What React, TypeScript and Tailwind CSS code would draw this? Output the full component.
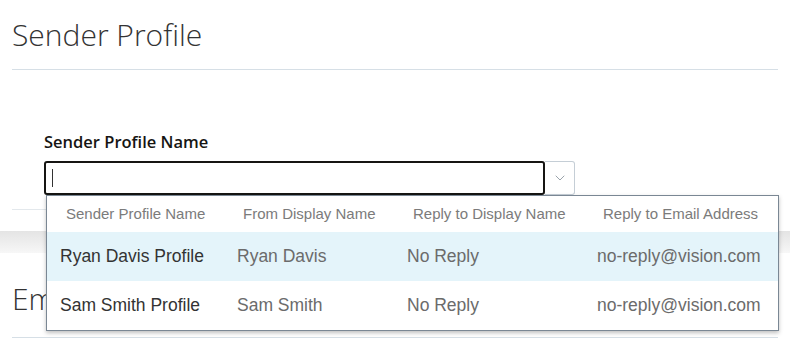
import { ChevronDown } from 'lucide-react';

const rows = [
  { profile: 'Ryan Davis Profile', from: 'Ryan Davis', reply: 'No Reply', email: 'no-reply@vision.com' },
  { profile: 'Sam Smith Profile', from: 'Sam Smith', reply: 'No Reply', email: 'no-reply@vision.com' },
];

const headers = ['Sender Profile Name', 'From Display Name', 'Reply to Display Name', 'Reply to Email Address'];

export default function App() {
  return (
    <div className="w-[790px] h-[341px] overflow-hidden bg-white font-['Liberation_Sans',sans-serif]">
      {/* Page title */}
      <div className="px-3">
        <h1 className="h-[70px] pt-[15px] border-b border-[#d6dfe6] text-[30px] leading-[40px] font-light text-[#333] font-['Open_Sans',sans-serif]">
          Sender Profile
        </h1>
      </div>

      {/* Field */}
      <div className="px-3">
        <div className="border-b border-[#e3e8ec] pt-[61px] pb-[14px] pl-8">
          <label className="block text-[16.5px] leading-[22px] font-semibold text-[#161513] font-['Open_Sans',sans-serif]">
            Sender Profile Name
          </label>
          <div className="relative mt-[8px] flex w-[531px]">
            <div className="flex h-[34px] flex-1 items-center rounded-[3px] border-2 border-[#161513] bg-white pl-[6px]">
              <span className="h-[18px] w-px bg-[#333]" />
            </div>
            <div className="flex h-[34px] w-[30px] items-center justify-center rounded-r-[3px] border border-l-0 border-[#c5ced6] bg-white">
              <ChevronDown className="h-4 w-4 text-[#9aa3ab]" strokeWidth={1.5} />
            </div>

            {/* Dropdown */}
            <div className="absolute left-[2px] top-[34px] z-10 w-[733px] border border-[#7a8794] bg-white shadow-[0_2px_4px_rgba(0,0,0,0.25)]">
              <div className="flex h-[36px] items-center text-[15px] text-[#7b7b7b]">
                {headers.map((h, i) => (
                  <div
                    key={h}
                    className={
                      i === 0 ? 'w-[177px] pl-[19px]' : i === 1 ? 'w-[170px] pl-[19px]' : i === 2 ? 'w-[190px] pl-[19px]' : 'flex-1 pl-[19px]'
                    }
                  >
                    {h}
                  </div>
                ))}
              </div>
              {rows.map((r, idx) => (
                <div
                  key={r.profile}
                  className={`flex h-[49px] items-center text-[17.5px] ${idx === 0 ? 'bg-[#e4f4fa]' : 'bg-white'}`}
                >
                  <div className="w-[177px] pl-[13px] text-[#333]">{r.profile}</div>
                  <div className="w-[170px] pl-[13px] text-[#6b6b6b]">{r.from}</div>
                  <div className="w-[190px] pl-[13px] text-[#6b6b6b]">{r.reply}</div>
                  <div className="flex-1 pl-[13px] text-[#6b6b6b]">{r.email}</div>
                </div>
              ))}
            </div>
          </div>
        </div>
      </div>

      {/* Gray band */}
      <div className="mt-[21px] h-[22px] bg-gradient-to-b from-[#e4e4e4] to-[#f7f7f7]" />

      {/* Next section */}
      <div className="px-3">
        <h2 className="h-[85px] pt-[26px] border-b border-[#d6dfe6] text-[30px] leading-[40px] font-light text-[#333] font-['Open_Sans',sans-serif]">
          Email Settings
        </h2>
      </div>
    </div>
  );
}
